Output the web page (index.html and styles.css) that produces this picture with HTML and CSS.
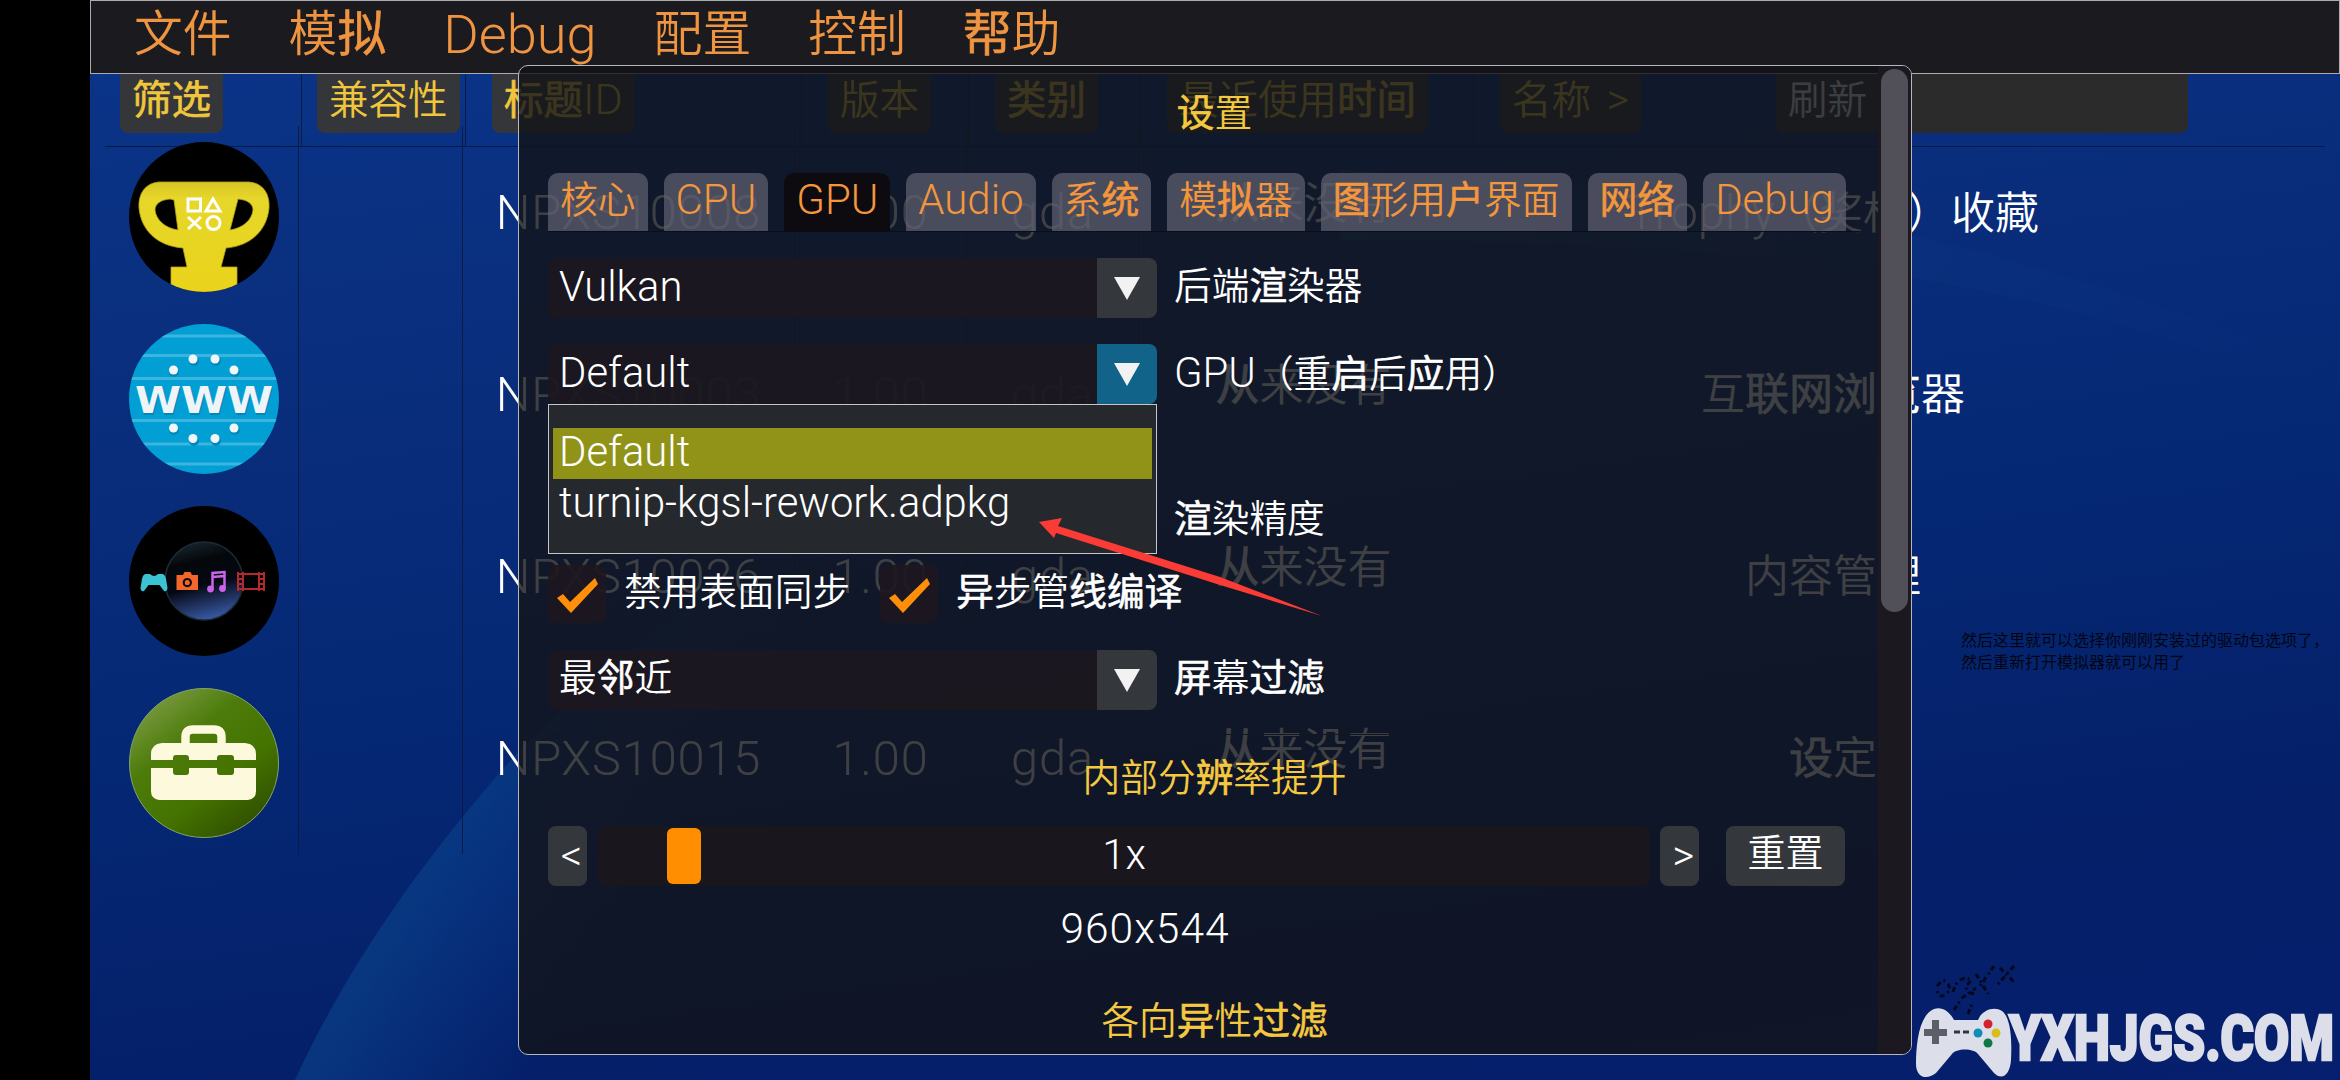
FILE: index.html
```
<!DOCTYPE html>
<html lang="zh-CN">
<head>
  <meta charset="UTF-8">
  <title>设置</title>
  <meta name="viewport" content="width=device-width, initial-scale=1.0" />
  <link rel="stylesheet" href="styles.css">
</head>
<body>
<div class="screen">
  <svg class="wallpaper" viewBox="0 0 2250 1080" preserveAspectRatio="none">
    <defs>
      <linearGradient id="beam" gradientUnits="userSpaceOnUse" x1="330" y1="880" x2="500" y2="975">
        <stop offset="0" stop-color="#0a448c" stop-opacity=".6"/>
        <stop offset="1" stop-color="#0a3f94" stop-opacity="0"/>
      </linearGradient>
      <linearGradient id="wave" x1="0" y1="0" x2="1" y2="0">
        <stop offset="0" stop-color="#11478a" stop-opacity=".7"/>
        <stop offset="1" stop-color="#0b2f7c" stop-opacity="0"/>
      </linearGradient>
    </defs>
    <path d="M205 1080 C260 960 340 850 430 750 C640 540 900 420 1250 300 L1250 420 C900 520 640 800 520 1080 Z" fill="url(#beam)"/>
    <path d="M1250 170 C1700 190 1900 240 2250 370 L2250 400 C1950 280 1700 240 1250 240 Z" fill="url(#wave)"/>
  </svg>

  <nav class="menubar">
    <span>文件</span>
    <span>模<b>拟</b></span>
    <span class="en">Debug</span>
    <span>配置</span>
    <span>控制</span>
    <span><b>帮</b>助</span>
  </nav>

  <div class="list-head">
    <div><button class="col-btn"><b>筛选</b></button></div>
    <div><button class="col-btn">兼容性</button></div>
    <div><button class="col-btn"><b>标题</b><span class="en">ID</span></button></div>
    <div><button class="col-btn">版本</button></div>
    <div><button class="col-btn"><b>类别</b></button></div>
    <div><button class="col-btn">最近使用<b>时间</b></button></div>
    <div class="name-head">
      <button class="col-btn">名称 <span class="en gt">&gt;</span></button>
      <button class="col-btn refresh">刷新</button>
      <div class="search"></div>
    </div>
  </div>

  <div class="list">
    <div class="row">
      <div>
        <svg class="app-icon" viewBox="0 0 150 150">
          <defs>
            <clipPath id="disc"><circle cx="75" cy="75" r="75"/></clipPath>
            <linearGradient id="gold" x1="0" y1="0" x2="0" y2="1">
              <stop offset="0" stop-color="#d8c424"/>
              <stop offset=".15" stop-color="#e6d72a"/>
              <stop offset="1" stop-color="#ead31a"/>
            </linearGradient>
          </defs>
          <g clip-path="url(#disc)">
            <rect width="150" height="150" fill="#000"/>
            <path fill="url(#gold)" stroke="#b9a51a" stroke-width=".8" fill-rule="evenodd" d="M30 40H120C134 41 141 52 140 66C138 88 122 104 97 106L92 125H108V150H42V125H58L54 106C28 104 12 88 10 66C9 52 16 41 30 40ZM41 57C31 58 26 62 26 68C27 78 36 86 49 88L45 58ZM109 57L101 88C114 86 123 78 124 68C124 62 119 58 109 57Z"/>
            <g fill="none" stroke="#fff" stroke-width="3">
              <rect x="59" y="57" width="12.500" height="12"/>
              <path d="M84 57L91 69H77ZM59 75L72 87M72 75L59 87"/>
              <circle cx="84.500" cy="81" r="6.500"/>
            </g>
          </g>
        </svg>
      </div>
      <div></div>
      <div class="en">NPXS10008</div>
      <div class="en">1.00</div>
      <div class="en">gda</div>
      <div class="last"><b>从</b>来没有</div>
      <div class="name"><span class="en">Trophy</span>（奖杯）收藏</div>
    </div>
    <div class="row">
      <div>
        <svg class="app-icon" viewBox="0 0 150 150">
          <g clip-path="url(#disc)">
            <rect width="150" height="150" fill="#029fd5"/>
            <path d="M0 12H150M0 31.500H150M0 54.500H150M0 96.500H150M0 120H150M0 140H150" stroke="#3bb5dd" stroke-width="3"/>
            <g fill="#0586b8">
              <circle cx="45" cy="48" r="5"/><circle cx="65" cy="37" r="5"/><circle cx="87" cy="37" r="5"/><circle cx="106" cy="48" r="5"/>
              <circle cx="45" cy="106" r="5"/><circle cx="65" cy="117" r="5"/><circle cx="87" cy="117" r="5"/><circle cx="106" cy="106" r="5"/>
            </g>
            <g fill="#f0f6f8">
              <circle cx="44.500" cy="46" r="4.500"/><circle cx="64" cy="35" r="4.500"/><circle cx="86" cy="35" r="4.500"/><circle cx="105" cy="46" r="4.500"/>
              <circle cx="44.500" cy="104" r="4.500"/><circle cx="64" cy="114.500" r="4.500"/><circle cx="86" cy="114.500" r="4.500"/><circle cx="105" cy="104" r="4.500"/>
            </g>
            <text class="www www-shade" x="7" y="91" textLength="138" lengthAdjust="spacingAndGlyphs">WWW</text>
            <text class="www" x="6" y="89" textLength="138" lengthAdjust="spacingAndGlyphs">WWW</text>
          </g>
        </svg>
      </div>
      <div></div>
      <div class="en">NPXS10003</div>
      <div class="en">1.00</div>
      <div class="en">gda</div>
      <div class="last"><b>从</b>来没有</div>
      <div class="name">互<b>联网浏览</b>器</div>
    </div>
    <div class="row">
      <div>
        <svg class="app-icon" viewBox="0 0 150 150">
          <defs>
            <linearGradient id="bubble" x1=".35" y1="0" x2=".6" y2="1">
              <stop offset="0" stop-color="#17242b"/>
              <stop offset=".25" stop-color="#04070a"/>
              <stop offset=".55" stop-color="#050812"/>
              <stop offset="1" stop-color="#3a5cab"/>
            </linearGradient>
          </defs>
          <circle cx="75" cy="75" r="75" fill="#000"/>
          <circle cx="75" cy="75" r="39" fill="url(#bubble)" stroke="#1d2c38" stroke-width="1.500"/>
          <path fill="#3cc3d3" d="M17 68H21Q23 70 25 70Q27 70 29 68H33Q36 68 37 73L38.500 82Q38 86 35 85L30.500 79H19.500L15 85Q12 86 11.500 82L13 73Q14 68 17 68Z"/>
          <path fill="#f3662a" fill-rule="evenodd" d="M48 69H54L55.500 66H61.500L63 69H69V84H47.500V69ZM58.300 72A4.600 4.600 0 1 0 58.310 72ZM58.300 74A2.600 2.600 0 1 1 58.290 74Z"/>
          <path fill="none" stroke="#c964e8" stroke-width="2.500" d="M83.500 83V67L95.500 66V82M83.500 71L95.500 70"/>
          <circle cx="81.500" cy="83" r="3.400" fill="#c964e8"/><circle cx="93.500" cy="82.500" r="3.400" fill="#c964e8"/>
          <path fill="none" stroke="#b5282e" stroke-width="2" d="M109 66V85M114 66V85M130 66V85M135 66V85M109 68H135M109 83H135M109 73H114M109 78H114M130 73H135M130 78H135"/>
        </svg>
      </div>
      <div></div>
      <div class="en">NPXS10026</div>
      <div class="en">1.00</div>
      <div class="en">gda</div>
      <div class="last"><b>从</b>来没有</div>
      <div class="name">内容管理</div>
    </div>
    <div class="row">
      <div>
        <svg class="app-icon" viewBox="0 0 150 150">
          <defs>
            <linearGradient id="green" x1=".15" y1=".1" x2=".8" y2=".95">
              <stop offset="0" stop-color="#76983c"/>
              <stop offset=".3" stop-color="#4d7c0c"/>
              <stop offset=".65" stop-color="#457300"/>
              <stop offset="1" stop-color="#2f5000"/>
            </linearGradient>
          </defs>
          <circle cx="75" cy="75" r="74.500" fill="url(#green)" stroke="#86a26a" stroke-width="1"/>
          <path fill="none" stroke="#fdf9dd" stroke-width="8.500" d="M56.500 58V49Q56.500 41.500 64 41.500H85Q92.500 41.500 92.500 49V58"/>
          <path fill="#fdf9dd" d="M33 55H116Q127 56 127 66V72H105V70Q105 67 102 67H91Q88 67 88 70V72H60V70Q60 67 57 67H47Q44 67 44 70V72H22V66Q22 56 33 55Z"/>
          <path fill="#fdf9dd" d="M22 80H44V84Q44 87 47 87H57Q60 87 60 84V80H88V84Q88 87 91 87H102Q105 87 105 84V80H127V103Q127 111 119 112H30Q22 111 22 103Z"/>
        </svg>
      </div>
      <div></div>
      <div class="en">NPXS10015</div>
      <div class="en">1.00</div>
      <div class="en">gda</div>
      <div class="last"><b>从</b>来没有</div>
      <div class="name"><b>设</b>定</div>
    </div>
  </div>

  <p class="note">然后这里就可以选择你刚刚安装过的驱动包选项了，<br>然后重新打开模拟器就可以用了</p>

  <section class="dialog">
    <div class="dialog-body">
      <h1><b>设</b>置</h1>
      <div class="tabs">
        <span>核心</span>
        <span><i class="en">CPU</i></span>
        <span class="active"><i class="en">GPU</i></span>
        <span><i class="en">Audio</i></span>
        <span>系<b>统</b></span>
        <span>模<b>拟</b>器</span>
        <span><b>图</b>形用<b>户</b>界面</span>
        <span><b>网络</b></span>
        <span><i class="en">Debug</i></span>
      </div>

      <div class="field">
        <div class="combo"><span class="en">Vulkan</span><div class="arrow"></div></div>
        <label>后端<b>渲</b>染器</label>
      </div>
      <div class="field">
        <div class="combo open"><span class="en">Default</span><div class="arrow"></div>
          <div class="dropdown">
            <div class="option selected en">Default</div>
            <div class="option en">turnip-kgsl-rework.adpkg</div>
          </div>
        </div>
        <label><span class="en">GPU</span>（重<b>启</b>后<b>应</b>用）</label>
      </div>
      <div class="field accuracy">
        <label><b>渲</b>染精度</label>
      </div>
      <div class="checks">
        <div class="check"><svg viewBox="0 0 58 58"><path d="M9 33L15 29L22 37L47 13L50 19L23 48Z"/></svg></div>
        <label>禁用表面同步</label>
        <div class="check"><svg viewBox="0 0 58 58"><path d="M9 33L15 29L22 37L47 13L50 19L23 48Z"/></svg></div>
        <label><b>异</b>步管<b>线编译</b></label>
      </div>
      <div class="field">
        <div class="combo"><span>最<b>邻</b>近</span><div class="arrow"></div></div>
        <label><b>屏</b>幕<b>过滤</b></label>
      </div>

      <h2 class="first">内部分<b>辨</b>率提升</h2>
      <div class="slider-row">
        <button class="step">&lt;</button>
        <div class="slider"><div class="thumb"></div><span class="en">1x</span></div>
        <button class="step">&gt;</button>
        <button class="reset">重置</button>
      </div>
      <div class="resolution">960x544</div>
      <h2>各向<b>异</b>性<b>过滤</b></h2>
    </div>
    <div class="scrollbar"><div class="scroll-thumb"></div></div>
  </section>

  <svg class="pointer" viewBox="0 0 290 104">
    <path d="M1 6L24 2L20 10L182 61L284 100L182 69L18 17L16 22Z" fill="#fb3b36"/>
  </svg>

  <svg class="watermark" viewBox="0 0 430 120">
    <g fill="none" stroke="#04081c" stroke-width="3" stroke-dasharray="5 3 2 4">
      <path d="M27 26Q37 14 40 30Q30 42 27 30M43 32Q48 14 62 20Q50 30 64 34M66 14L78 34M84 6L70 26M90 8L104 22M104 6L88 24M44 50L52 38L66 28M58 54L62 44"/>
    </g>
    <path fill="#dcdfe9" d="M24 49C32 46 40 52 44 60H68C72 50 84 46 92 51C101 58 102 80 101 100C100 115 92 121 84 113L68 94C64 88 46 88 42 94L26 113C16 121 6 117 6 104C6 84 9 55 24 49Z"/>
    <path fill="#5c5e68" d="M22 60H29V69H37V76H29V84H22V76H14V69H22Z"/>
    <path stroke="#33353e" stroke-width="3" d="M44 72H50M53 72H59"/>
    <circle cx="78" cy="64" r="4.500" fill="#d3222e"/>
    <circle cx="68" cy="73" r="4.500" fill="#108cb8"/>
    <circle cx="86" cy="73" r="4.500" fill="#d8bf18"/>
    <circle cx="78" cy="83" r="4.500" fill="#127545"/>
    <text x="99" y="100" textLength="325" lengthAdjust="spacingAndGlyphs">YXHJGS.COM</text>
  </svg>
</div>
</body>
</html>
```
FILE: styles.css
```
body {
  margin: 0;
  background-color: #000;
  font-family: Roboto, "Noto Sans CJK SC", sans-serif;
  font-weight: 350;
  color: white;
}

b {
  font-weight: 400;
  -webkit-text-stroke: 0.6px currentColor;
}

i {
  font-style: normal;
}

button {
  border: none;
  font-family: inherit;
  font-weight: inherit;
  color: inherit;
}

/* latin glyphs run a bit larger than the hanzi */
.en {
  font-size: 1.11em;
}

.screen {
  position: relative;
  box-sizing: border-box;
  width: 2340px;
  height: 1080px;
  padding-left: 90px;
  overflow: hidden;
}

.wallpaper {
  position: absolute;
  top: 0;
  left: 90px;
  width: 2250px;
  height: 1080px;
  background: linear-gradient(172deg, #0a3488 5%, #0a2f7e 25%, #052874 55%, #051f69 80%, #061f6e 100%);
}

.menubar {
  position: relative;
  box-sizing: border-box;
  height: 74px;
  padding-left: 43px;
  display: flex;
  align-items: center;
  gap: 57px;
  background-color: #1b1a1f;
  border: 1px solid #aaacb0;
  font-size: 48.8px;
  line-height: 66px;
  color: #ef9440;
}

.menubar span {
  height: 70px;
}

/* game list */
.list-head {
  position: relative;
  margin: 0 15px;
  height: 72px;
  display: grid;
  grid-template-columns: 196px 164px 336px 167px 172px 333px 1fr;
  border-bottom: 1px solid #081a44;
}

.list-head > div {
  padding-left: 26px;
  border-left: 1px solid #0a1c46;
}

.list-head > div:nth-child(-n+2) {
  padding-left: 15px;
}

.list-head > div:first-child {
  border-left: none;
}

.col-btn {
  display: block;
  height: 59px;
  padding: 0 12px 6px;
  background-color: #34363a;
  border-radius: 0 0 8px 8px;
  font-size: 39.5px;
  line-height: 53px;
  color: #f0c63c;
  white-space: nowrap;
}

.col-btn .en {
  font-size: 43px;
  line-height: 40px;
}

.col-btn .gt {
  margin-left: 6px;
}

.name-head {
  display: flex;
}

.refresh {
  margin-left: 135px;
  color: #eee;
}

.search {
  width: 309px;
  height: 59px;
  background-color: #2b2b2b;
  border-radius: 0 0 8px 0;
}

.list {
  position: relative;
  margin: -21px 15px 0;
}

.row {
  height: 182px;
  display: grid;
  grid-template-columns: 193px 164px 332px 172px 172px 330px 730px;
  font-size: 44px;
  line-height: 174px;
  text-align: center;
  white-space: nowrap;
}

.row > div {
  border-left: 1px solid #0a1c46;
}

.row > div:first-child,
.row > div:last-child {
  border-left: none;
}

.row > .name {
  border-left: 1px solid transparent;
}

.row > .en {
  letter-spacing: 0.8px;
}

.row .last {
  line-height: 157px;
}

.app-icon {
  display: block;
  width: 150px;
  height: 150px;
  margin: 16px 0 0 24px;
}

.www {
  font: bold 37px "DejaVu Sans", sans-serif;
  fill: #eef4f7;
}

.www-shade {
  fill: #0586b8;
}

/* settings window */
.dialog {
  position: absolute;
  top: 65px;
  left: 518px;
  box-sizing: border-box;
  width: 1394px;
  height: 990px;
  display: flex;
  border: 1px solid #b4b7bd;
  border-radius: 10px;
  overflow: hidden;
  background-color: rgba(18, 20, 23, 0.81);
  font-size: 37.7px;
}

.dialog-body {
  width: 1359px;
  padding-left: 29px;
  box-sizing: border-box;
}

.dialog h1,
.dialog h2 {
  margin: 0;
  width: 1333px;
  font-size: 37.7px;
  font-weight: inherit;
  line-height: 44px;
  text-align: center;
  color: #f5c93f;
}

.dialog h1 {
  padding-top: 25px;
}

.dialog h2 {
  margin-top: 27px;
  padding-top: 16px;
  border-top: 1px solid #101722;
}

.dialog h2.first {
  margin-top: 24px;
  padding-top: 21px;
}

.tabs {
  width: 1312px;
  margin-top: 38px;
  display: flex;
  gap: 16px;
  border-bottom: 1px solid #0a0e18;
  font-size: 37.8px;
}

.tabs span {
  height: 58px;
  padding: 0 12px;
  background-color: rgba(98, 99, 116, 0.7);
  border-radius: 10px 10px 0 0;
  line-height: 54px;
  color: #f3963c;
  white-space: nowrap;
}

.tabs .active {
  background-color: #0d0b10;
}

.field {
  display: flex;
  height: 60px;
  margin-top: 26px;
  line-height: 57px;
}

.field label {
  margin-left: 17px;
  white-space: nowrap;
}

.combo {
  position: relative;
  display: flex;
  justify-content: space-between;
  width: 609px;
  box-sizing: border-box;
  padding-left: 11px;
  background-color: rgba(27, 24, 31, 0.93);
  border-radius: 8px;
}

.arrow {
  width: 60px;
  height: 60px;
  display: flex;
  align-items: center;
  justify-content: center;
  background-color: #34373b;
  border-radius: 0 8px 8px 0;
}

.arrow::before {
  content: '';
  border-left: 13px solid transparent;
  border-right: 13px solid transparent;
  border-top: 23px solid #f2f2f2;
}

.open .arrow {
  background-color: #12638a;
}

.dropdown {
  position: absolute;
  top: 60px;
  left: 0;
  box-sizing: border-box;
  width: 609px;
  height: 150px;
  padding: 23px 4px;
  background-color: #25282c;
  border: 1px solid #c4c6ca;
}

.option {
  height: 51px;
  padding-left: 6px;
  line-height: 47px;
}

.selected {
  background-color: #919319;
}

.accuracy {
  margin-top: 87px;
  padding-left: 609px;
}

.checks {
  display: flex;
  height: 58px;
  margin-top: 14px;
  line-height: 55px;
}

.checks label {
  margin: 0 30px 0 18px;
}

.check {
  width: 58px;
  background-color: rgba(29, 22, 30, 0.9);
  border-radius: 8px;
}

.check svg {
  display: block;
  fill: #ff8f0a;
}

.checks + .field {
  margin-top: 27px;
}

.slider-row {
  display: flex;
  height: 60px;
  margin-top: 26px;
}

.step,
.reset {
  padding: 0 0 0 8px;
  width: 39px;
  background-color: #34373b;
  border-radius: 8px;
  font-size: 42px;
  line-height: 60px;
}

.reset {
  width: 119px;
  margin-left: 27px;
  padding: 0 0 5px;
  font-size: 38px;
  line-height: 55px;
}

.slider {
  position: relative;
  width: 1052px;
  margin: 0 10px 0 11px;
  background-color: rgba(27, 22, 30, 0.95);
  border-radius: 8px;
  line-height: 57px;
  text-align: center;
}

.thumb {
  position: absolute;
  top: 2px;
  left: 69px;
  width: 34px;
  height: 56px;
  background-color: #ff8f00;
  border-radius: 6px;
}

.resolution {
  width: 1194px;
  margin-top: 17px;
  font-size: 42.5px;
  letter-spacing: 1px;
  line-height: 52px;
  text-align: center;
}

.scrollbar {
  width: 33px;
  box-sizing: border-box;
  padding: 3px 3px 0;
  background-color: #1b181f;
}

.scroll-thumb {
  height: 543px;
  border-radius: 14px;
  background-color: #515058;
}

.pointer {
  position: absolute;
  top: 516px;
  left: 1038px;
  width: 290px;
  height: 104px;
}

.note {
  position: absolute;
  top: 628px;
  left: 1961px;
  margin: 0;
  font: 16px/22px "Noto Sans CJK SC", sans-serif;
  color: #030612;
  white-space: nowrap;
}

.watermark {
  position: absolute;
  top: 960px;
  left: 1910px;
  width: 430px;
  height: 120px;
}

.watermark text {
  font: 900 63px Roboto, sans-serif;
  fill: #dcdfe9;
  stroke: #dcdfe9;
  stroke-width: 2.5;
}
```
